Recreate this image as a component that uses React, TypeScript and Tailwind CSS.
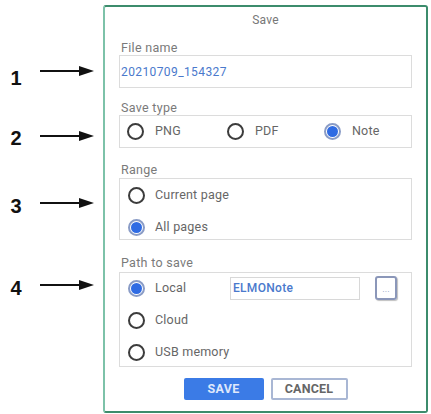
import React from "react";

const font = { fontFamily: "Roboto, 'Noto Sans', Arial, sans-serif" };

function Arrow({ cls }: { cls: string }) {
  return (
    <svg width="54" height="12" viewBox="0 0 54 12" className={cls}>
      <line x1="0" y1="6" x2="42" y2="6" stroke="#111" strokeWidth="2.2" />
      <polygon points="39,1 54,6 39,11" fill="#111" />
    </svg>
  );
}

function Callout({ n, rowCls, arrowCls }: { n: string; rowCls: string; arrowCls: string }) {
  return (
    <div className={`flex items-start h-[20px] ${rowCls}`}>
      <div
        className="w-[16px] text-center text-[20px] leading-[20px] font-bold text-[#111]"
        style={{ fontFamily: "'Liberation Sans', Arial, sans-serif" }}
      >
        {n}
      </div>
      <Arrow cls={`ml-[16px] ${arrowCls}`} />
    </div>
  );
}

function Radio({ on }: { on?: boolean }) {
  if (on)
    return (
      <div className="w-[17px] h-[17px] shrink-0 rounded-full border-2 border-[#8a9cc6] flex items-center justify-center">
        <div className="w-[11px] h-[11px] rounded-full bg-[#2f6be3]" />
      </div>
    );
  return <div className="w-[17px] h-[17px] shrink-0 rounded-full border-2 border-[#3c3c3c]" />;
}

function Label({ children, cls }: { children: React.ReactNode; cls: string }) {
  return (
    <div className={`h-[14px] leading-[14px] text-[12.5px] tracking-[0.3px] text-[#7a7a7a] pl-[2px] ${cls}`}>
      {children}
    </div>
  );
}

export default function App() {
  return (
    <div className="w-[431px] h-[414px] bg-white flex overflow-hidden" style={font}>
      <div className="w-[103px] shrink-0 flex flex-col pl-[8px]">
        <Callout n="1" rowCls="mt-[68px]" arrowCls="mt-[-3px]" />
        <Callout n="2" rowCls="mt-[40px]" arrowCls="mt-[2px]" />
        <Callout n="3" rowCls="mt-[48px]" arrowCls="mt-[1px]" />
        <Callout n="4" rowCls="mt-[62px]" arrowCls="mt-[1px]" />
      </div>
      <div className="w-[325px] h-[408px] mt-[5px] shrink-0 border-2 border-[#3c8c6c] border-l-[#7dc2a9] rounded-[3px] bg-white flex flex-col px-[14px]">
        <div className="h-[26px] flex items-center justify-center text-[12px] tracking-[0.2px] text-[#777]">Save</div>

        <Label cls="mt-[8px]">File name</Label>
        <div className="h-[33px] border border-[#dcdcdc] flex items-center pl-[1px] text-[12px] tracking-[0.4px] text-[#4a79cc]">
          20210709_154327
        </div>

        <Label cls="mt-[13px]">Save type</Label>
        <div className="h-[33px] border border-[#dcdcdc] flex items-center pl-[7px] text-[12.5px] tracking-[0.2px] text-[#666]">
          <div className="w-[100px] flex items-center gap-[11px]">
            <Radio />
            <span>PNG</span>
          </div>
          <div className="w-[97px] flex items-center gap-[11px]">
            <Radio />
            <span>PDF</span>
          </div>
          <div className="flex items-center gap-[11px]">
            <Radio on />
            <span>Note</span>
          </div>
        </div>

        <Label cls="mt-[15px]">Range</Label>
        <div className="h-[62px] mt-[1px] border border-[#dcdcdc] flex flex-col pt-[4px] gap-[8px] pl-[8px] text-[12.5px] tracking-[0.2px] text-[#666]">
          <div className="h-[24px] flex items-center gap-[10px]">
            <Radio />
            <span>Current page</span>
          </div>
          <div className="h-[24px] flex items-center gap-[10px]">
            <Radio on />
            <span>All pages</span>
          </div>
        </div>

        <Label cls="mt-[16px]">Path to save</Label>
        <div className="h-[95px] mt-[2px] border border-[#dcdcdc] flex flex-col pt-[3px] gap-[8px] pl-[8px] text-[12.5px] tracking-[0.2px] text-[#666]">
          <div className="h-[24px] flex items-center">
            <Radio on />
            <span className="ml-[10px] w-[75px]">Local</span>
            <div className="w-[130px] h-[23px] border border-[#d8d8d8] flex items-center pl-[2px] text-[12px] tracking-[0.3px] font-medium text-[#4a79cc]">
              ELMONote
            </div>
            <div className="ml-[15px] w-[22px] h-[24px] border-2 border-[#8b97b9] rounded-[3px] shadow-[1px_1px_1px_rgba(0,0,0,0.25)] flex items-end justify-center pb-[4px] text-[9px] leading-[9px] text-[#8898c0]">
              ...
            </div>
          </div>
          <div className="h-[24px] flex items-center gap-[10px]">
            <Radio />
            <span>Cloud</span>
          </div>
          <div className="h-[24px] flex items-center gap-[10px]">
            <Radio />
            <span>USB memory</span>
          </div>
        </div>

        <div className="mt-[11px] flex justify-center gap-[7px]">
          <div className="w-[80px] h-[22px] bg-[#3b7be6] rounded-[2px] flex items-center justify-center text-[12.5px] tracking-[0.3px] font-bold text-[#dfe8fb]">
            SAVE
          </div>
          <div className="w-[77px] h-[22px] border-2 border-[#a9b7d4] rounded-[2px] bg-white flex items-center justify-center text-[12.5px] tracking-[0.2px] font-bold text-[#666]">
            CANCEL
          </div>
        </div>
      </div>
    </div>
  );
}
